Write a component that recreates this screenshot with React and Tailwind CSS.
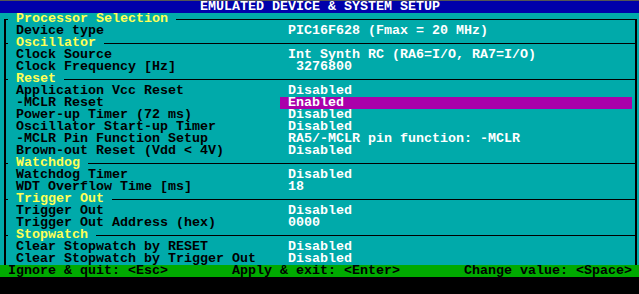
import React from "react";

const rows = [
  { h: "Processor Selection", first: true },
  { l: "Device type", v: "PIC16F628 (Fmax = 20 MHz)" },
  { h: "Oscillator" },
  { l: "Clock Source", v: "Int Synth RC (RA6=I/O, RA7=I/O)" },
  { l: "Clock Frequency [Hz]", v: " 3276800" },
  { h: "Reset" },
  { l: "Application Vcc Reset", v: "Disabled" },
  { l: "-MCLR Reset", v: "Enabled", sel: true },
  { l: "Power-up Timer (72 ms)", v: "Disabled" },
  { l: "Oscillator Start-up Timer", v: "Disabled" },
  { l: "-MCLR Pin Function Setup", v: "RA5/-MCLR pin function: -MCLR" },
  { l: "Brown-out Reset (Vdd < 4V)", v: "Disabled" },
  { h: "Watchdog" },
  { l: "Watchdog Timer", v: "Disabled" },
  { l: "WDT Overflow Time [ms]", v: "18" },
  { h: "Trigger Out" },
  { l: "Trigger Out", v: "Disabled" },
  { l: "Trigger Out Address (hex)", v: "0000" },
  { h: "Stopwatch" },
  { l: "Clear Stopwatch by RESET", v: "Disabled" },
  { l: "Clear Stopwatch by Trigger Out", v: "Disabled" },
];

function LeftCell({ kind }) {
  if (kind === "first") {
    return (
      <div className="w-2 h-3 flex shrink-0">
        <div className="ml-1 w-[2px] flex flex-col pt-[6px]">
          <div className="flex-1 bg-black" />
        </div>
        <div className="flex-1 pt-[6px]">
          <div className="h-px bg-black" />
        </div>
      </div>
    );
  }
  if (kind === "header") {
    return (
      <div className="w-2 h-3 flex shrink-0">
        <div className="ml-1 w-[2px] bg-black" />
        <div className="flex-1 pt-[6px]">
          <div className="h-px bg-black" />
        </div>
      </div>
    );
  }
  return (
    <div className="w-2 h-3 flex shrink-0">
      <div className="ml-1 w-[2px] bg-black" />
    </div>
  );
}

function RightCell({ kind }) {
  if (kind === "first") {
    return (
      <div className="w-[7px] h-3 flex shrink-0">
        <div className="w-[3px] pt-[6px]">
          <div className="h-px bg-black" />
        </div>
        <div className="w-[2px] flex flex-col pt-[6px]">
          <div className="flex-1 bg-black" />
        </div>
      </div>
    );
  }
  if (kind === "header") {
    return (
      <div className="w-[7px] h-3 flex shrink-0">
        <div className="w-[3px] pt-[6px]">
          <div className="h-px bg-black" />
        </div>
        <div className="w-[2px] bg-black" />
      </div>
    );
  }
  return (
    <div className="w-[7px] h-3 flex shrink-0">
      <div className="w-[3px]" />
      <div className="w-[2px] bg-black" />
    </div>
  );
}

export default function App() {
  return (
    <div
      className="w-[639px] h-[294px] bg-black overflow-hidden font-bold text-[13.333px] leading-[12px] whitespace-pre"
      style={{ fontFamily: '"Liberation Mono", "DejaVu Sans Mono", monospace' }}
    >
      <div className="h-px bg-[#555555]" />
      <div className="h-3 bg-[#0000aa] text-white pl-[200px]">
        EMULATED DEVICE &amp; SYSTEM SETUP
      </div>
      <div className="bg-[#00aaaa]">
        {rows.map((r, i) => {
          const kind = r.first ? "first" : r.h ? "header" : "item";
          return (
            <div key={i} className="h-3 flex">
              <LeftCell kind={kind} />
              {r.h ? (
                <div className="flex-1 flex pl-2">
                  <span className="text-[#ffff55]">{r.h}</span>
                  <div className="flex-1 ml-2 pt-[6px]">
                    <div className="h-px bg-black" />
                  </div>
                </div>
              ) : (
                <div className="flex-1 flex">
                  <div className="w-[272px] pl-2 text-black">{r.l}</div>
                  <div
                    className={
                      r.sel
                        ? "flex-1 pl-2 text-white bg-[#aa00aa]"
                        : "flex-1 pl-2 text-white"
                    }
                  >
                    {r.v}
                  </div>
                </div>
              )}
              <RightCell kind={kind} />
            </div>
          );
        })}
      </div>
      <div className="h-3 bg-[#00aa00] text-black flex pl-2">
        <span className="w-[224px]">Ignore &amp; quit: &lt;Esc&gt;</span>
        <span className="w-[232px]">Apply &amp; exit: &lt;Enter&gt;</span>
        <span>Change value: &lt;Space&gt;</span>
      </div>
    </div>
  );
}
